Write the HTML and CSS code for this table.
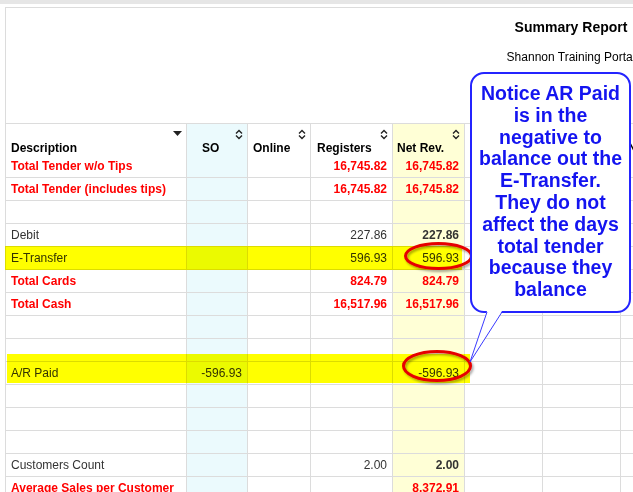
FILE: index.html
```html
<!DOCTYPE html>
<html>
<head>
<meta charset="utf-8">
<title>Summary Report</title>
<link rel="stylesheet" href="styles.css">
</head>
<body>
<div class="topbar"></div>
<div class="report">
  <div class="report-head">
    <div class="title">Summary Report</div>
    <div class="subtitle">Shannon Training Portal</div>
  </div>
  <table class="grid">
    <colgroup>
      <col class="c-desc"><col class="c-so"><col class="c-online"><col class="c-reg"><col class="c-net"><col class="c-x"><col class="c-x"><col class="c-w"><col class="c-w">
    </colgroup>
    <thead>
      <tr>
        <th class="desc"><div class="th-in"><svg class="caret" width="9" height="5" viewBox="0 0 9 5"><polygon points="0,0 9,0 4.5,5" fill="#222"/></svg><span class="lbl">Description</span></div></th>
        <th class="so"><div class="th-in"><svg class="sort" width="8" height="11" viewBox="0 0 8 11"><path d="M1 4.5 L4 1.5 L7 4.5 M1 6.5 L4 9.5 L7 6.5" fill="none" stroke="#222" stroke-width="1.4"/></svg><span class="lbl">SO</span></div></th>
        <th><div class="th-in"><svg class="sort" width="8" height="11" viewBox="0 0 8 11"><path d="M1 4.5 L4 1.5 L7 4.5 M1 6.5 L4 9.5 L7 6.5" fill="none" stroke="#222" stroke-width="1.4"/></svg><span class="lbl">Online</span></div></th>
        <th class="reg"><div class="th-in"><svg class="sort" width="8" height="11" viewBox="0 0 8 11"><path d="M1 4.5 L4 1.5 L7 4.5 M1 6.5 L4 9.5 L7 6.5" fill="none" stroke="#222" stroke-width="1.4"/></svg><span class="lbl">Registers</span></div></th>
        <th class="net"><div class="th-in"><svg class="sort" width="8" height="11" viewBox="0 0 8 11"><path d="M1 4.5 L4 1.5 L7 4.5 M1 6.5 L4 9.5 L7 6.5" fill="none" stroke="#222" stroke-width="1.4"/></svg><span class="lbl">Net Rev.</span></div></th>
        <th><div class="th-in"><svg class="sort" width="8" height="11" viewBox="0 0 8 11"><path d="M1 4.5 L4 1.5 L7 4.5 M1 6.5 L4 9.5 L7 6.5" fill="none" stroke="#222" stroke-width="1.4"/></svg><span class="lbl">Tax</span></div></th>
        <th><div class="th-in"><svg class="sort" width="8" height="11" viewBox="0 0 8 11"><path d="M1 4.5 L4 1.5 L7 4.5 M1 6.5 L4 9.5 L7 6.5" fill="none" stroke="#222" stroke-width="1.4"/></svg><span class="lbl">Tips</span></div></th>
        <th class="last"><div class="th-in"><svg class="sort" width="8" height="11" viewBox="0 0 8 11"><path d="M1 4.5 L4 1.5 L7 4.5 M1 6.5 L4 9.5 L7 6.5" fill="none" stroke="#222" stroke-width="1.4"/></svg><span class="lbl">Net Sales</span></div></th>
        <th><div class="th-in"><svg class="sort" width="8" height="11" viewBox="0 0 8 11"><path d="M1 4.5 L4 1.5 L7 4.5 M1 6.5 L4 9.5 L7 6.5" fill="none" stroke="#222" stroke-width="1.4"/></svg><span class="lbl">Total</span></div></th>
      </tr>
    </thead>
    <tbody>
      <tr class="tot"><td>Total Tender w/o Tips</td><td class="so"></td><td></td><td class="num">16,745.82</td><td class="net num">16,745.82</td><td></td><td></td><td></td><td></td></tr>
      <tr class="tot"><td>Total Tender (includes tips)</td><td class="so"></td><td></td><td class="num">16,745.82</td><td class="net num">16,745.82</td><td></td><td></td><td></td><td></td></tr>
      <tr><td></td><td class="so"></td><td></td><td></td><td class="net"></td><td></td><td></td><td></td><td></td></tr>
      <tr><td>Debit</td><td class="so"></td><td></td><td class="num">227.86</td><td class="net num b">227.86</td><td></td><td></td><td></td><td></td></tr>
      <tr><td>E-Transfer</td><td class="so"></td><td></td><td class="num">596.93</td><td class="net num">596.93</td><td></td><td></td><td></td><td></td></tr>
      <tr class="tot"><td>Total Cards</td><td class="so"></td><td></td><td class="num">824.79</td><td class="net num">824.79</td><td></td><td></td><td></td><td></td></tr>
      <tr class="tot"><td>Total Cash</td><td class="so"></td><td></td><td class="num">16,517.96</td><td class="net num">16,517.96</td><td></td><td></td><td></td><td></td></tr>
      <tr><td></td><td class="so"></td><td></td><td></td><td class="net"></td><td></td><td></td><td></td><td></td></tr>
      <tr><td></td><td class="so"></td><td></td><td></td><td class="net"></td><td></td><td></td><td></td><td></td></tr>
      <tr><td>A/R Paid</td><td class="so num">-596.93</td><td></td><td></td><td class="net num">-596.93</td><td></td><td></td><td></td><td></td></tr>
      <tr><td></td><td class="so"></td><td></td><td></td><td class="net"></td><td></td><td></td><td></td><td></td></tr>
      <tr><td></td><td class="so"></td><td></td><td></td><td class="net"></td><td></td><td></td><td></td><td></td></tr>
      <tr><td></td><td class="so"></td><td></td><td></td><td class="net"></td><td></td><td></td><td></td><td></td></tr>
      <tr><td>Customers Count</td><td class="so"></td><td></td><td class="num">2.00</td><td class="net num b">2.00</td><td></td><td></td><td></td><td></td></tr>
      <tr class="tot"><td>Average Sales per Customer</td><td class="so"></td><td></td><td></td><td class="net num">8,372.91</td><td></td><td></td><td></td><td></td></tr>
    </tbody>
  </table>
</div>

<div class="hl hl-etransfer"></div>
<div class="hl hl-ar"></div>

<svg class="annot" width="633" height="492" viewBox="0 0 633 492">
  <defs>
    <filter id="sh" x="-20%" y="-30%" width="140%" height="160%">
      <feDropShadow dx="1.5" dy="2" stdDeviation="1.2" flood-color="#000" flood-opacity="0.35"/>
    </filter>
  </defs>
  <ellipse cx="438.5" cy="256" rx="33" ry="12.5" fill="none" stroke="#e60000" stroke-width="3" filter="url(#sh)"/>
  <ellipse cx="437" cy="366" rx="33.5" ry="14.5" fill="none" stroke="#e60000" stroke-width="3" filter="url(#sh)"/>
  <rect x="471" y="73" width="159" height="239" rx="13" ry="13" fill="#fff" stroke="#2424ff" stroke-width="2"/>
  <polygon points="487,311 470,362 502,311" fill="#fff"/>
  <path d="M487 312 L470 362 L502 312" fill="none" stroke="#3a3aff" stroke-width="1"/>
</svg>

<div class="callout-text">Notice AR Paid<br>is in the<br>negative to<br>balance out the<br>E-Transfer.<br>They do not<br>affect the days<br>total tender<br>because they<br>balance</div>
</body>
</html>
```

FILE: styles.css
```css
html, body {
  margin: 0;
  padding: 0;
  overflow: hidden;
  background: #fff;
}
body {
  font-family: "Liberation Sans", Arial, sans-serif;
  font-size: 12px;
  color: #333;
  width: 633px;
  height: 492px;
  position: relative;
}
.topbar {
  height: 4px;
  background: #e6e6e6;
}
.report {
  margin: 3px 0 0 5px;
  width: 1130px;
  border-top: 1px solid #dcdcdc;
  border-left: 1px solid #dcdcdc;
}
.report-head {
  height: 115px;
  box-sizing: border-box;
  padding-top: 11px;
  text-align: center;
  color: #000;
}
.title {
  font-size: 14px;
  font-weight: bold;
  line-height: 16px;
}
.subtitle {
  margin-top: 15px;
  font-size: 12px;
  line-height: 14px;
}
.grid {
  border-collapse: separate;
  border-spacing: 0;
  table-layout: fixed;
  width: 815px;
  border-top: 1px solid #dcdcdc;
}
.c-desc { width: 181px; }
.c-so { width: 61px; }
.c-online { width: 63px; }
.c-reg { width: 82px; }
.c-net { width: 72px; }
.c-x { width: 78px; }
.c-w { width: 100px; }

.grid th,
.grid td {
  box-sizing: border-box;
  border-right: 1px solid #dcdcdc;
  padding: 0 5px;
  white-space: nowrap;
  overflow: hidden;
}
.grid th {
  height: 31px;
  vertical-align: top;
  text-align: left;
  font-weight: bold;
  color: #000;
}
.th-in {
  display: flex;
  flex-direction: column;
  height: 31px;
}
.sort {
  align-self: flex-end;
  margin: 5px -1px 0 0;
  display: block;
}
.caret {
  align-self: flex-end;
  margin: 7px -1px 0 0;
  display: block;
}
.lbl {
  margin-top: auto;
  line-height: 14px;
  display: block;
}
.grid th.so .lbl { padding-left: 10px; }
.grid th.reg .lbl { padding-left: 1px; }
.grid th.net { padding-left: 4px; }
.grid th.last { padding-left: 7px; }

.grid td {
  height: 23px;
  border-bottom: 1px solid #dcdcdc;
  line-height: 14px;
  vertical-align: middle;
}
.grid .so { background: #ebfafd; }
.grid .net { background: #ffffd6; }
.grid td.num { text-align: right; }
.grid td.b { font-weight: bold; }
.grid tr.tot td {
  color: #ff0000;
  font-weight: bold;
}

.hl {
  position: absolute;
  background: #ffff00;
  mix-blend-mode: multiply;
  z-index: 1;
}
.hl-etransfer {
  left: 5px;
  top: 246px;
  width: 457px;
  height: 24px;
}
.hl-ar {
  left: 7px;
  top: 354px;
  width: 463px;
  height: 29px;
}
.annot {
  position: absolute;
  left: 0;
  top: 0;
  z-index: 2;
  pointer-events: none;
}
.callout-text {
  position: absolute;
  left: 471px;
  top: 83px;
  width: 159px;
  z-index: 3;
  text-align: center;
  font-family: "Liberation Sans", Arial, sans-serif;
  font-weight: bold;
  font-size: 19.5px;
  line-height: 21.8px;
  color: #1414f0;
}
```
